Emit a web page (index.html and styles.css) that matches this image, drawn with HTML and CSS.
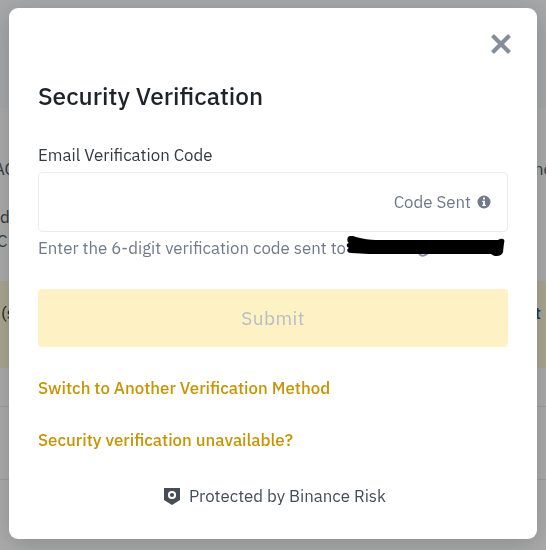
FILE: index.html
```
<!DOCTYPE html>
<html lang="en">
<head>
<meta charset="utf-8">
<title>Security Verification</title>
<link rel="stylesheet" href="styles.css">
</head>
<body>
<div class="page">
  <div class="page-header"></div>
  <div class="page-copy">
    <div class="copy-row copy-first"><span class="cut-left">AC</span><span class="cut-right">nc</span></div>
    <div class="copy-row copy-second"><span>d</span></div>
    <div class="copy-row copy-third"><span>C</span></div>
  </div>
  <div class="page-notice"><span>(s</span><span class="notice-link">t</span></div>
  <div class="page-row row-first"></div>
  <div class="page-row"></div>
</div>
<div class="overlay">
  <main class="modal">
    <header class="modal-top">
      <svg class="close" viewBox="0 0 22 22"><path d="M2.5 2.5 19.5 19.5M19.5 2.5 2.5 19.5" stroke="#848e9c" stroke-width="4.2" fill="none"/></svg>
    </header>
    <h1><span>Security Verification</span></h1>
    <div class="label"><span>Email Verification Code</span></div>
    <div class="field">
      <span class="sent">Code Sent</span>
      <svg class="info" viewBox="0 0 14 14"><circle cx="7" cy="7" r="6.5" fill="#707a8a"/><path d="M6 2.6h2v2H6zM5.2 5.7H8v4h.9v1.2H5.2V9.700H6V6.900h-.8z" fill="#fff"/></svg>
    </div>
    <div class="hint">
      <span>Enter the 6-digit verification code sent to</span>
      <svg class="scribble" viewBox="0 0 160 24"><path d="M73 18q4 4 9-1" stroke="#8b95a5" stroke-width="2" fill="none"/><path d="M2 1C5-1 8 0 10 1C17 3 24 4 30 4H152L154 3C158 2 159 4 158 7L157 16C156 21 148 21 145 18H23L5 17C1 17 0 13 3 12C0 11 0 7 3 7C1 6 1 3 2 1Z"/></svg>
    </div>
    <button class="submit" disabled><span>Submit</span></button>
    <a class="link switch"><span>Switch to Another Verification Method</span></a>
    <a class="link unavailable"><span>Security verification unavailable?</span></a>
    <footer class="protected">
      <svg class="shield" viewBox="0 0 16 17"><path d="M0 0H16V12L8 17 0 12Z" fill="#474d57"/><circle cx="8" cy="7" r="3.100" fill="none" stroke="#fff" stroke-width="2"/></svg>
      <span>Protected by Binance Risk</span>
    </footer>
  </main>
</div>
</body>
</html>
```
FILE: styles.css
```
* { box-sizing: border-box; }
body {
  margin: 0;
  width: 546px;
  height: 550px;
  overflow: hidden;
  font-family: "IBM Plex Sans", Roboto, "Noto Sans", sans-serif;
  font-size: 16.83px;
  line-height: 24px;
}
svg { display: block; flex: none; }
.page { height: 550px; background: #acacac; color: #34383d; }
.page-header { height: 108px; background: #a7a8a9; }
.page-copy { height: 173px; padding-top: 49px; }
.copy-row { display: flex; justify-content: space-between; height: 24px; }
.copy-first { height: 48px; }
.cut-left { margin-left: -6px; }
.cut-right { margin-right: -6px; }
.copy-third span { margin-left: -3px; }
.page-notice {
  display: flex;
  justify-content: space-between;
  height: 87px;
  padding: 20px 5px 0 1px;
  background: #aca791;
  color: #17191c;
}
.notice-link { color: #123952; font-weight: 500; }
.page-row { height: 73px; border-bottom: 1px solid #9d9d9f; }
.row-first { height: 39px; }
.overlay { position: fixed; inset: 0; padding: 8px 9px 11px; }
.modal {
  display: flex;
  flex-direction: column;
  height: 531px;
  padding: 0 29px;
  border-radius: 9px;
  background: #fff;
  box-shadow: 0 6px 26px rgba(24, 26, 32, .22);
}
.modal-top { display: flex; justify-content: flex-end; height: 72px; padding: 25px 0 0; }
.close { width: 22px; height: 22px; margin-right: -4px; }
h1 { margin: 0; font-size: 24.4px; line-height: 32px; font-weight: 500; color: #1e2329; }
.label { margin-top: 31px; height: 29px; color: #343a42; }
.field {
  display: flex;
  align-items: center;
  justify-content: flex-end;
  height: 60px;
  padding-right: 16px;
  border: 1px solid #eaecef;
  border-radius: 4px;
  color: #707a8a;
}
.info { width: 14px; height: 14px; margin-left: 6px; }
.hint { display: flex; height: 24px; margin-top: 4px; color: #707a8a; white-space: nowrap; }
.scribble { width: 160px; height: 24px; }
.submit {
  height: 58px;
  margin-top: 29px;
  padding: 0;
  border: 0;
  border-radius: 4px;
  background: #fef1c3;
  color: #b7bdc6;
  font: 400 19px/58px "IBM Plex Sans", Roboto, "Noto Sans", sans-serif;
  letter-spacing: .45px;
}
.link { height: 24px; color: #c99400; font-weight: 500; }
.switch { margin-top: 29px; }
.unavailable { margin-top: 28px; }
.protected { display: flex; justify-content: center; margin-top: 32px; padding-left: 4px; color: #474d57; }
.shield { width: 16px; height: 17px; margin: 4px 9px 0 0; }
```
